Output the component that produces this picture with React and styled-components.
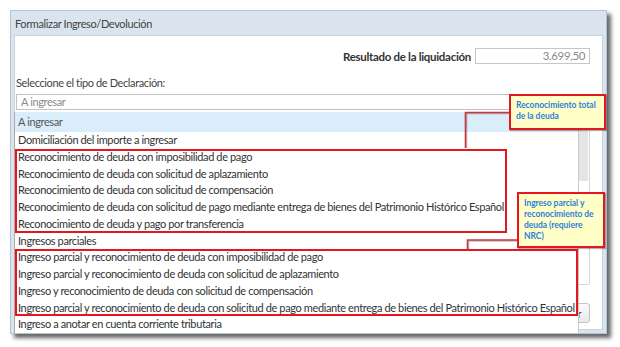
import React from "react";
import styled, { createGlobalStyle, css } from "styled-components";

const options = [
  { label: "A ingresar", active: true },
  { label: "Domiciliación del importe a ingresar" },
  {
    group: 492,
    items: [
      "Reconocimiento de deuda con imposibilidad de pago",
      "Reconocimiento de deuda con solicitud de aplazamiento",
      "Reconocimiento de deuda con solicitud de compensación",
      "Reconocimiento de deuda con solicitud de pago mediante entrega de bienes del Patrimonio Histórico Español",
      "Reconocimiento de deuda y pago por transferencia",
    ],
  },
  { label: "Ingresos parciales" },
  {
    group: 563,
    items: [
      "Ingreso parcial y reconocimiento de deuda con imposibilidad de pago",
      "Ingreso parcial y reconocimiento de deuda con solicitud de aplazamiento",
      "Ingreso y reconocimiento de deuda con solicitud de compensación",
      "Ingreso parcial y reconocimiento de deuda con solicitud de pago mediante entrega de bienes del Patrimonio Histórico Español",
    ],
  },
  { label: "Ingreso a anotar en cuenta corriente tributaria" },
];

const App = () => {
  return (
    <Stage>
      <GlobalStyle />

      <Window>
        <TitleBar>Formalizar Ingreso/Devolución</TitleBar>

        <Body>
          <ResultRow>
            <ResultLabel>Resultado de la liquidación</ResultLabel>
            <AmountInput>3.699,50</AmountInput>
          </ResultRow>

          <FieldLabel>Seleccione el tipo de Declaración:</FieldLabel>
          <Select>A ingresar</Select>

          <Detail>
            <ScrollThumb />
          </Detail>

          <Actions>
            <Button>Aceptar</Button>
          </Actions>
        </Body>

        <DropList>
          {options.map((opt, i) =>
            opt.group ? (
              <Marked key={`g-${i}`} $width={opt.group}>
                {opt.items.map((txt, j) => (
                  <Option key={`o-${i}-${j}`}>{txt}</Option>
                ))}
              </Marked>
            ) : (
              <Option key={`o-${i}`} $active={opt.active}>
                {opt.label}
              </Option>
            )
          )}
        </DropList>
      </Window>

      {/* callout connectors */}
      <Connectors width="620" height="347">
        <path d="M510 113.5 H466.5 V148" stroke="rgba(0,0,0,0.25)" />
        <path d="M509 112.5 H465.5 V148" stroke="#cf3439" />
        <path d="M518 241 H468.5 V250" stroke="rgba(0,0,0,0.25)" />
        <path d="M517 240 H467.5 V250" stroke="#cf3439" />
      </Connectors>

      <Callout $left={509} $top={94} $width={97} $height={36}>
        Reconocimiento total
        <br />
        de la deuda
      </Callout>

      <Callout $left={517} $top={192} $width={88} $height={56}>
        Ingreso parcial y
        <br />
        reconocimiento de
        <br />
        deuda (requiere
        <br />
        NRC)
      </Callout>
    </Stage>
  );
};

export default App;



const uiText = css`
  font-family: Lato, "Liberation Sans", sans-serif;
  font-size: 11px;
  letter-spacing: -0.38px;
`;

const GlobalStyle = createGlobalStyle`
  html, body {
    margin: 0;
    background: #fff;
  }
  body {
    font-family: Lato, "Liberation Sans", sans-serif;
    color: #333;
  }
`;

const Stage = styled.div`
  position: relative;
  width: 620px;
  height: 347px;
  padding: 10px 0 0 10px;
  box-sizing: border-box;
  overflow: hidden;
`;

const Window = styled.section`
  position: relative;
  width: 597px;
  height: 324px;
  box-sizing: border-box;
  display: flex;
  flex-direction: column;
  padding: 0 3px 3px 3px;
  background: #d9e4ee;
  border: 1px solid #b4c4d3;
  box-shadow: 4px 4px 4px rgba(0, 0, 0, 0.6);
`;

const TitleBar = styled.header`
  ${uiText};
  height: 24px;
  display: flex;
  align-items: center;
  padding-left: 1px;
  color: #444;
`;

const Body = styled.div`
  flex: 1;
  display: flex;
  flex-direction: column;
  padding: 12px 12px 0 1px;
  background: #fff;
  border: 1px solid #c7d3de;
`;

const ResultRow = styled.div`
  display: flex;
  justify-content: flex-end;
  align-items: center;
  gap: 4px;
`;

const ResultLabel = styled.span`
  ${uiText};
  font-size: 11.5px;
  letter-spacing: -0.3px;
  font-weight: 700;
  color: #333;
`;

const AmountInput = styled.div`
  ${uiText};
  font-size: 11.5px;
  width: 115px;
  height: 16px;
  box-sizing: border-box;
  padding-right: 4px;
  border: 1px solid #c6c6c6;
  line-height: 14px;
  color: #8a8a8a;
  text-align: right;
`;

const FieldLabel = styled.div`
  ${uiText};
  margin-top: 12px;
  color: #444;
`;

const Select = styled.div`
  ${uiText};
  margin-top: 5px;
  height: 16px;
  box-sizing: border-box;
  padding-left: 4px;
  border: 1px solid #c2c2c2;
  line-height: 14px;
  color: #8a8a8a;
`;

const Detail = styled.div`
  position: relative;
  margin-top: 4px;
  height: 171px;
  box-sizing: border-box;
  border: 1px solid #d6d6d6;
  border-radius: 2px;
`;

const ScrollThumb = styled.div`
  position: absolute;
  top: 0;
  right: 1px;
  width: 10px;
  height: 66px;
  background: #e4e4e4;
  border-left: 1px solid #d0d0d0;
`;

const Actions = styled.div`
  display: flex;
  justify-content: flex-end;
  margin-top: 18px;
`;

const Button = styled.button`
  ${uiText};
  height: 20px;
  padding: 0 8px;
  border: 1px solid #c4c4c4;
  border-radius: 3px;
  background: linear-gradient(#fafafa, #e9e9e9);
  color: #444;
`;

const DropList = styled.ul`
  position: absolute;
  left: 3px;
  top: 101px;
  width: 565px;
  height: 221px;
  margin: 0;
  padding: 0;
  list-style: none;
  box-sizing: border-box;
  overflow: hidden;
  background: #fff;
  border-left: 1px solid #a9a9a9;
  border-right: 1px solid #cacaca;
`;

const Option = styled.li`
  ${uiText};
  height: ${(p) => (p.$active ? "20px" : "16.75px")};
  line-height: ${(p) => (p.$active ? "20px" : "16.75px")};
  padding-left: 3px;
  white-space: nowrap;
  color: ${(p) => (p.$active ? "#555" : "#333")};
  background: ${(p) => (p.$active ? "#d9edfa" : "transparent")};
`;

const Marked = styled.div`
  width: ${(p) => p.$width}px;
  box-shadow: inset 0 0 0 2px #e5161e;
`;

const Connectors = styled.svg`
  position: absolute;
  left: 0;
  top: 0;
  pointer-events: none;
  fill: none;
  stroke-width: 1.6;
`;

const Callout = styled.div`
  position: absolute;
  left: ${(p) => p.$left}px;
  top: ${(p) => p.$top}px;
  width: ${(p) => p.$width}px;
  height: ${(p) => p.$height}px;
  box-sizing: border-box;
  padding: 4px 0 0 5px;
  background: #ffffc7;
  border: 2px solid #e5161e;
  box-shadow: 1px 1px 1px rgba(0, 0, 0, 0.3);
  font-family: Lato, "Liberation Sans", sans-serif;
  font-size: 8.5px;
  font-weight: 700;
  letter-spacing: -0.05px;
  line-height: 11px;
  white-space: nowrap;
  color: #2b7fdc;
`;
